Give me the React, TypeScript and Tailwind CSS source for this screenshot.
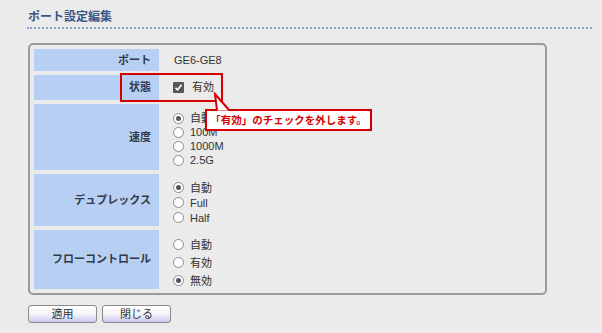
import React from "react";

const font = { fontFamily: '"Liberation Sans", "Noto Sans CJK JP", sans-serif' };

function Radio({ checked, label }: { checked?: boolean; label: string }) {
  return (
    <div className="flex items-center">
      <span className="w-[11px] h-[11px] rounded-full border border-[#8a8a8a] bg-white flex items-center justify-center shrink-0">
        {checked && <span className="w-[5px] h-[5px] rounded-full bg-[#555]" />}
      </span>
      <span className="ml-[6px] text-[11px] leading-[12px] text-[#333]">{label}</span>
    </div>
  );
}

function Row({
  label,
  h,
  children,
}: {
  label: string;
  h: string;
  children: React.ReactNode;
}) {
  return (
    <div className={`flex ${h}`}>
      <div className="w-[125px] bg-[#b7cff3] flex items-center justify-end pr-[8px] text-[11px] font-bold text-[#333a4a]">
        {label}
      </div>
      <div className="flex-1 pl-[14px] flex flex-col justify-center">{children}</div>
    </div>
  );
}

export default function App() {
  return (
    <div className="relative w-[602px] h-[333px] bg-[#ebebeb] overflow-hidden" style={font}>
      <div className="pl-[27px] pr-[10px] pt-[10px]">
        <div className="text-[12px] leading-[14px] font-bold text-[#3b5685] pl-[1px]">ポート設定編集</div>
        <div className="mt-[3px] border-b-2 border-dotted border-[#8ea2c4]" />
      </div>

      <div className="ml-[28px] mt-[14px] w-[519px] h-[252px] border-2 border-[#9a9a9a] rounded-[5px] bg-[#ebebeb] pt-[4px] px-[4px]">
        <div className="flex flex-col gap-[4px]">
          <Row label="ポート" h="h-[22px]">
            <div className="text-[11px] text-[#333] pl-[1px]">GE6-GE8</div>
          </Row>
          <Row label="状態" h="h-[25px]">
            <div className="flex items-center">
              <span className="w-[11px] h-[11px] rounded-[1px] bg-[#555] flex items-center justify-center">
                <svg width="9" height="9" viewBox="0 0 9 9">
                  <path d="M1.5 4.8 L3.6 6.8 L7.6 1.8" stroke="#fff" strokeWidth="1.6" fill="none" />
                </svg>
              </span>
              <span className="ml-[8px] text-[11px] text-[#333]">有効</span>
            </div>
          </Row>
          <Row label="速度" h="h-[66px]">
            <div className="flex flex-col gap-[2px] pt-[4px]">
              <Radio checked label="自動" />
              <Radio label="100M" />
              <Radio label="1000M" />
              <Radio label="2.5G" />
            </div>
          </Row>
          <Row label="デュプレックス" h="h-[52px]">
            <div className="flex flex-col gap-[3px] pt-[5px]">
              <Radio checked label="自動" />
              <Radio label="Full" />
              <Radio label="Half" />
            </div>
          </Row>
          <Row label="フローコントロール" h="h-[59px]">
            <div className="flex flex-col gap-[6px] pt-[6px]">
              <Radio label="自動" />
              <Radio label="有効" />
              <Radio checked label="無効" />
            </div>
          </Row>
        </div>
      </div>

      <div className="ml-[28px] mt-[10px] flex gap-[5px]">
        <button className="w-[69px] h-[18px] border border-[#8a8a8a] rounded-[3px] bg-gradient-to-b from-white via-[#f4f4fb] to-[#c9c9ee] text-[11px] leading-[16px] text-[#333]">
          適用
        </button>
        <button className="w-[69px] h-[18px] border border-[#8a8a8a] rounded-[3px] bg-gradient-to-b from-white via-[#f4f4fb] to-[#c9c9ee] text-[11px] leading-[16px] text-[#333]">
          閉じる
        </button>
      </div>

      {/* red highlight box */}
      <div className="absolute left-[120px] top-[73px] w-[103px] h-[29px] border-2 border-[#d40000]" />

      {/* callout */}
      <div className="absolute left-[205px] top-[109px] w-[167px] h-[22px] border-2 border-[#d40000] bg-white flex items-center justify-center whitespace-nowrap text-[10.5px] leading-[12px] text-[#d40000] font-bold">
        「有効」のチェックを外します。
      </div>
      <svg className="absolute left-[210px] top-[92px]" width="24" height="20" viewBox="0 0 24 20">
        <path d="M7 18.5 L5 2 L19 18.5 Z" fill="white" />
        <path d="M7 18 L5 2 L19 18" fill="none" stroke="#d40000" strokeWidth="2" />
      </svg>
    </div>
  );
}
